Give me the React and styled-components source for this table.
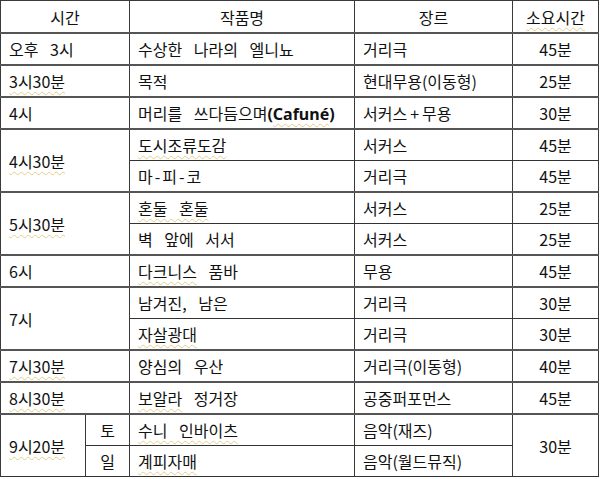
import React from 'react';
import styled, { createGlobalStyle } from 'styled-components';

const GlobalStyle = createGlobalStyle`
  html, body {
    margin: 0;
    padding: 0;
    background: #fff;
  }
  body {
    font-family: "Noto Sans CJK KR", "Noto Sans", sans-serif;
    color: #111;
  }
`;

const Table = styled.table`
  width: 598px;
  table-layout: fixed;
  border-collapse: collapse;
  font-size: 16px;
  word-spacing: 8px;
  line-height: 1;
`;

const HeadCell = styled.th`
  height: 31px;
  padding: 0;
  font-weight: 400;
  text-align: center;
  border: 1.5px solid #3a3a3a;
  border-bottom: 2px solid #555;
`;

const Cell = styled.td`
  height: 30px;
  padding: 0 8px;
  text-align: ${p => (p.$center ? 'center' : 'left')};
  vertical-align: middle;
  white-space: nowrap;
  border-left: 1.5px solid #3a3a3a;
  border-right: 1.5px solid #3a3a3a;
  border-top: ${p => (p.$groupStart ? '2px solid #555' : '1px solid #333')};
  border-bottom: 1px solid #333;
`;

const Squiggle = styled.span`
  text-decoration: underline wavy rgba(210, 175, 70, 0.6);
  text-decoration-thickness: 1px;
  text-underline-offset: 3px;
`;

const Latin = styled.b`
  font-family: "Noto Sans", "Open Sans", sans-serif;
  font-weight: 700;
  word-spacing: 0;
`;

const Sign = styled.span`
  margin: 0 ${p => p.$gap || 3}px;
`;

const groups = [
  { time: '오후 3시', items: [{ title: '수상한 나라의 엘니뇨', genre: '거리극', dur: '45분' }] },
  { time: <Squiggle>3시30분</Squiggle>, items: [{ title: '목적', genre: '현대무용(이동형)', dur: '25분' }] },
  {
    time: '4시',
    items: [{
      title: <>머리를 쓰다듬으며<Latin>(<Squiggle>Cafuné</Squiggle>)</Latin></>,
      genre: <>서커스<Sign>+</Sign>무용</>,
      dur: '30분',
    }],
  },
  {
    time: <Squiggle>4시30분</Squiggle>,
    items: [
      { title: <Squiggle>도시조류도감</Squiggle>, genre: '서커스', dur: '45분' },
      { title: <>마<Sign $gap={2}>-</Sign>피<Sign $gap={2}>-</Sign>코</>, genre: '거리극', dur: '45분' },
    ],
  },
  {
    time: <Squiggle>5시30분</Squiggle>,
    items: [
      { title: <Squiggle>혼둘 혼둘</Squiggle>, genre: '서커스', dur: '25분' },
      { title: '벽 앞에 서서', genre: '서커스', dur: '25분' },
    ],
  },
  { time: '6시', items: [{ title: <><Squiggle>다크니스</Squiggle> 품바</>, genre: '무용', dur: '45분' }] },
  {
    time: '7시',
    items: [
      { title: '남겨진, 남은', genre: '거리극', dur: '30분' },
      { title: <Squiggle>자살광대</Squiggle>, genre: '거리극', dur: '30분' },
    ],
  },
  { time: <Squiggle>7시30분</Squiggle>, items: [{ title: '양심의 우산', genre: '거리극(이동형)', dur: '40분' }] },
  { time: <Squiggle>8시30분</Squiggle>, items: [{ title: <><Squiggle>보알라</Squiggle> 정거장</>, genre: '공중퍼포먼스', dur: '45분' }] },
  {
    time: <Squiggle>9시20분</Squiggle>,
    shared: '30분',
    items: [
      { day: '토', title: <Squiggle>수니 인바이츠</Squiggle>, genre: '음악(재즈)' },
      { day: '일', title: <Squiggle>계피자매</Squiggle>, genre: '음악(월드뮤직)' },
    ],
  },
];

const App = () => {
  return (
    <>
      <GlobalStyle />
      <Table>
        <colgroup>
          <col style={{ width: 85 }} />
          <col style={{ width: 44 }} />
          <col style={{ width: 225 }} />
          <col style={{ width: 158 }} />
          <col style={{ width: 86 }} />
        </colgroup>
        <thead>
          <tr>
            <HeadCell colSpan={2}>시간</HeadCell>
            <HeadCell>작품명</HeadCell>
            <HeadCell>장르</HeadCell>
            <HeadCell><Squiggle>소요시간</Squiggle></HeadCell>
          </tr>
        </thead>
        <tbody>
          {groups.map((g, gi) =>
            g.items.map((it, i) => (
              <tr key={`${gi}-${i}`}>
                {i === 0 && (
                  <Cell
                    $groupStart
                    rowSpan={g.items.length}
                    colSpan={it.day ? 1 : 2}
                  >
                    {g.time}
                  </Cell>
                )}
                {it.day && <Cell $center $groupStart={i === 0}>{it.day}</Cell>}
                <Cell $groupStart={i === 0}>{it.title}</Cell>
                <Cell $groupStart={i === 0}>{it.genre}</Cell>
                {g.shared
                  ? i === 0 && (
                      <Cell $center $groupStart rowSpan={g.items.length}>{g.shared}</Cell>
                    )
                  : <Cell $center $groupStart={i === 0}>{it.dur}</Cell>}
              </tr>
            ))
          )}
        </tbody>
      </Table>
    </>
  );
};

export default App;
